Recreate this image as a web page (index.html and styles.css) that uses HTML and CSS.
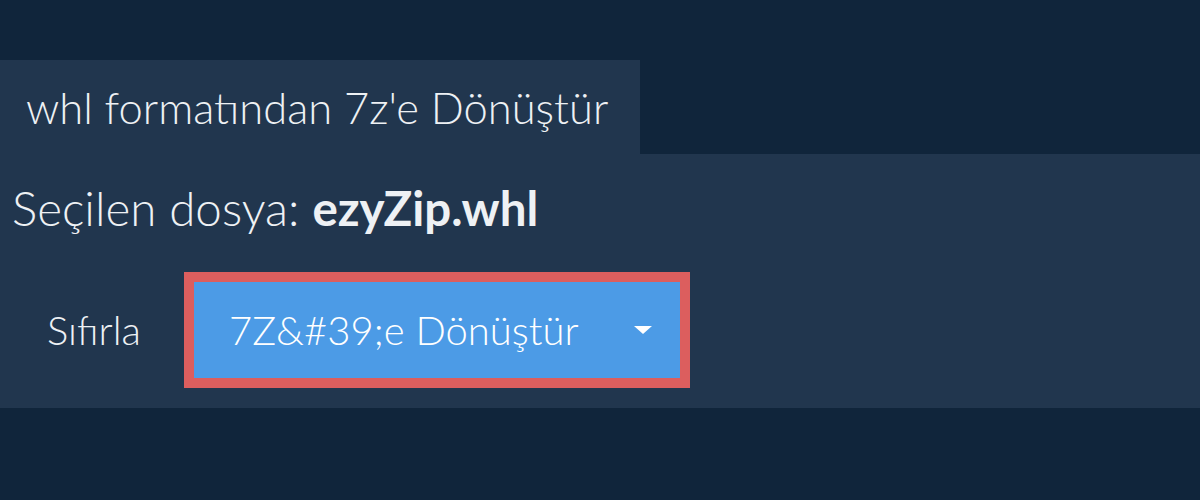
FILE: index.html
```html
<!DOCTYPE html>
<html lang="tr">
<head>
<meta charset="utf-8">
<link rel="stylesheet" href="styles.css">
</head>
<body>
<div class="page">
  <div class="tab">whl formatından 7z'e Dönüştür</div>
  <div class="panel">
    <div class="file">Seçilen dosya: <b>ezyZip.whl</b></div>
    <div class="actions">
      <span class="reset">Sıfırla</span>
      <div class="btn-wrap">
        <button class="btn"><span class="label">7Z&amp;#39;e Dönüştür</span><span class="caret"></span></button>
      </div>
    </div>
  </div>
</div>
</body>
</html>
```
FILE: styles.css
```css
html, body {
  margin: 0;
  padding: 0;
  background: #10253b;
  height: 100%;
}
body {
  font-family: Lato, "Noto Sans", sans-serif;
  color: #eef1f4;
}
.page {
  padding-top: 60px;
}
.tab {
  width: 640px;
  height: 94px;
  box-sizing: border-box;
  background: #21364e;
  font-size: 43.5px;
  font-weight: 300;
  padding-left: 26px;
  display: flex;
  align-items: center;
}
.panel {
  background: #21364e;
  height: 254px;
  box-sizing: border-box;
  padding: 30px 0 0 12px;
}
.file {
  font-size: 47.5px;
  font-weight: 300;
  line-height: 48px;
}
.file b {
  font-weight: 700;
}
.actions {
  display: flex;
  align-items: center;
  margin-top: 40px;
}
.reset {
  font-size: 40px;
  font-weight: 300;
  margin-left: 35px;
  width: 137px;
}
.btn-wrap {
  background: #dc5e5e;
  padding: 10px;
}
.btn {
  width: 486px;
  height: 96px;
  border: 0;
  background: #4c9be6;
  color: #fff;
  font-family: Lato, "Noto Sans", sans-serif;
  font-size: 40px;
  font-weight: 300;
  display: flex;
  align-items: center;
  padding: 0 28px 0 35px;
  box-sizing: border-box;
}
.label {
  flex: 1;
  text-align: left;
}
.caret {
  width: 0;
  height: 0;
  border-left: 9px solid transparent;
  border-right: 9px solid transparent;
  border-top: 8px solid #fff;
}
```
